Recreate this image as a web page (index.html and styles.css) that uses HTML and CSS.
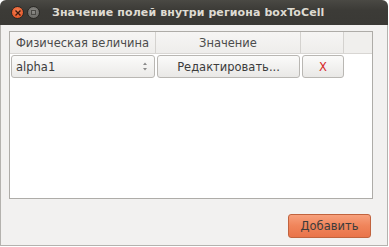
FILE: index.html
```html
<!DOCTYPE html>
<html lang="ru">
<head>
<meta charset="utf-8">
<link rel="stylesheet" href="styles.css">
</head>
<body>
<div class="window">
  <div class="titlebar">
    <div class="wbtns">
      <span class="wbtn close"><svg width="8" height="8" viewBox="0 0 8 8"><path d="M1.5 1.5L6.5 6.5M6.5 1.5L1.5 6.5" stroke="#3a1a10" stroke-width="1.4"/></svg></span>
      <span class="wbtn min"><span class="sq"></span></span>
    </div>
    <div class="title">Значение полей внутри региона boxToCell</div>
  </div>
  <div class="body">
    <div class="table">
      <div class="thead">
        <div class="th c1">Физическая величина</div>
        <div class="th c2">Значение</div>
        <div class="th c3"></div>
        <div class="th c4"></div>
      </div>
      <div class="trow">
        <div class="combo"><span>alpha1</span>
          <svg class="spin" width="6" height="11" viewBox="0 0 6 11"><path d="M3 1.5L5 4H1Z M3 9.5L5 7H1Z" fill="#8a8a8a"/></svg>
        </div>
        <button class="btn edit">Редактировать...</button>
        <button class="btn del">X</button>
      </div>
    </div>
    <div class="footer">
      <button class="add">Добавить</button>
    </div>
  </div>
</div>
</body>
</html>
```
FILE: styles.css
```css
* { box-sizing: border-box; }
html, body { margin: 0; padding: 0; background: #ffffff; }
body { width: 389px; height: 247px; overflow: hidden; font-family: "DejaVu Sans", sans-serif; font-size: 11.5px; color: #3c3c3c; }
.window { width: 388px; height: 246px; display: flex; flex-direction: column; }
.titlebar {
  height: 25px; flex: none; display: flex; align-items: center;
  background: linear-gradient(#4a4944, #3c3b37 40%, #3a3935);
  border-radius: 6px 6px 0 0; padding-left: 11px;
}
.wbtns { display: flex; gap: 3px; }
.wbtn { width: 13px; height: 13px; border-radius: 50%; display: flex; align-items: center; justify-content: center; }
.close { background: radial-gradient(circle at 50% 40%, #f7875a, #e4582a 70%, #c2461f); border: 1px solid #2a2925; }
.min { background: radial-gradient(circle at 50% 40%, #8d8c88, #6a6965 75%); border: 1px solid #2a2925; }
.sq { width: 5px; height: 5px; border: 1px solid #4a4945; }
.title { margin-left: 12px; color: #dfdbd2; font-weight: bold; font-size: 11px; letter-spacing: 0.1px; }
.body {
  flex: 1; background: #f2f1f0; border: 1px solid #b4b2ae; border-top: none;
  padding: 6px 14px 7px 8px; display: flex; flex-direction: column;
}
.table { flex: 1; background: #fff; border: 1px solid #aeaca8; display: flex; flex-direction: column; }
.thead { display: flex; height: 22px; background: linear-gradient(#f6f5f4, #eeedeb); border-bottom: 1px solid #d8d6d3; }
.th { display: flex; align-items: center; justify-content: center; border-right: 1px solid #d4d2cf; color: #4c4c4c; }
.c1 { width: 146px; }
.c2 { width: 145px; }
.c3 { width: 43px; }
.c4 { flex: 1; border-right: none; background: #f0efed; }
.trow { display: flex; padding: 1px 0 0 1px; gap: 2px; height: 24px; }
.combo {
  width: 144px; height: 23px; border: 1px solid #b9b7b3; border-radius: 3px;
  background: linear-gradient(#fbfbfa, #ebeae8); display: flex; align-items: center;
  justify-content: space-between; padding: 0 6px 0 4px; color: #3c3c3c;
}
.btn {
  height: 23px; border: 1px solid #b9b7b3; border-radius: 3px;
  background: linear-gradient(#fbfbfa, #e9e8e6); font-family: inherit; font-size: 11.5px; color: #3c3c3c; padding: 0;
}
.edit { width: 143px; }
.del { width: 42px; color: #d62a2a; }
.footer { height: 39px; flex: none; display: flex; justify-content: flex-end; align-items: flex-end; }
.add {
  width: 83px; height: 24px; border: 1px solid #c1633e; border-radius: 3px; margin-right: 2px;
  background: linear-gradient(#f7a07c, #f0845a 50%, #e9744a); font-family: inherit; font-size: 11.5px; color: #3c3c3c; padding: 0;
}
```
